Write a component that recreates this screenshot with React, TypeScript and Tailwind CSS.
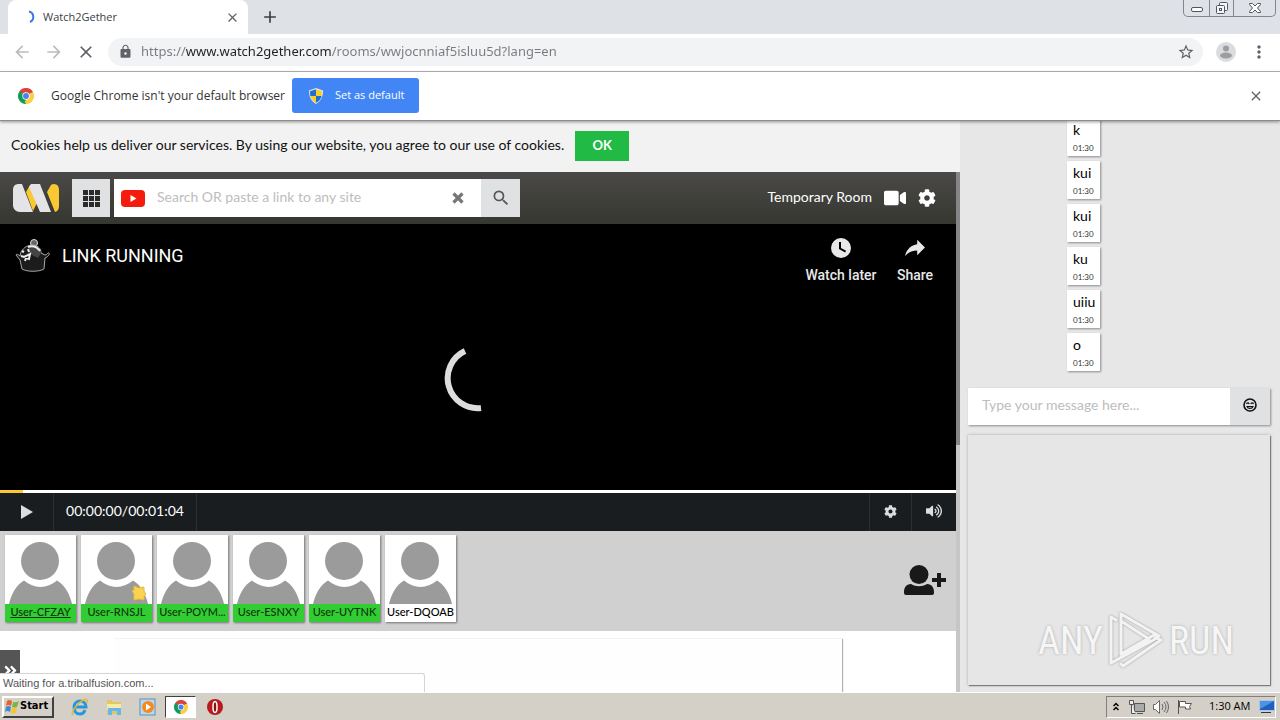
import React from 'react';
import { FaCog, FaVideo, FaVolumeUp, FaAngleDoubleRight } from 'react-icons/fa';
import { MdAdd, MdArrowBack, MdArrowForward, MdClose, MdLock, MdMoreVert, MdSearch, MdStarBorder } from 'react-icons/md';

const users = [
  { name: "User-CFZAY", active: true, self: true },
  { name: "User-RNSJL", active: true, starred: true },
  { name: "User-POYM...", active: true },
  { name: "User-ESNXY", active: true },
  { name: "User-UYTNK", active: true },
  { name: "User-DQOAB", active: false }
];

const messages = [
  { text: "k", time: "01:30" },
  { text: "kui", time: "01:30" },
  { text: "kui", time: "01:30" },
  { text: "ku", time: "01:30" },
  { text: "uiiu", time: "01:30" },
  { text: "o", time: "01:30" }
];

function ChromeLogo({ className }: { className?: string }) {
  return (
    <svg viewBox="0 0 24 24" className={className} aria-hidden="true">
      <path fill="#db4437" d="M12 12 1.6 6A12 12 0 0 1 22.4 6Z" />
      <path fill="#0f9d58" d="M12 12V24A12 12 0 0 1 1.6 6Z" />
      <path fill="#ffcd40" d="M12 12 22.4 6A12 12 0 0 1 12 24Z" />
      <path fill="#db4437" d="M12 6.5H22.6L22.4 6 12 3Z" />
      <path fill="#0f9d58" d="m7.2 14.7-5.6-8.7L4 5Z" />
      <path fill="#ffcd40" d="M16.8 14.7 12 24 10 20Z" />
      <circle cx="12" cy="12" r="5.5" fill="#fff" />
      <circle cx="12" cy="12" r="4.4" fill="#4285f4" />
    </svg>
  );
}

function ShieldIcon() {
  return (
    <svg viewBox="0 0 14 16" className="w-[14px] h-4" aria-hidden="true">
      <path fill="#e8e8e8" d="M7 0 14 2.5C14 9 12 13 7 16 2 13 0 9 0 2.5Z" />
      <path fill="#1f6fd0" d="M7 1.2V8H1.3C1.1 6.500 1 5 1 3.300Z" />
      <path fill="#f7cf2d" d="M7 1.2V8H12.700C12.900 6.500 13 5 13 3.300Z" />
      <path fill="#f7cf2d" d="M7 8H1.300C2 11 4 13.300 7 15Z" />
      <path fill="#1f6fd0" d="M7 8H12.700C12 11 10 13.300 7 15Z" />
    </svg>
  );
}

function TabStrip() {
  return (
    <div className="flex h-[34px] shrink-0 bg-[#dee1e6] pl-2">
      <div className="flex w-[240px] items-center rounded-t-lg bg-white pl-4 pr-2">
        <svg viewBox="0 0 16 16" className="mr-[3px] size-4" fill="none" aria-hidden="true">
          <path d="M5 2.600A5.500 5.500 0 0 1 6 13" stroke="#3b78e7" strokeWidth="2" />
        </svg>
        <span className="flex-1 text-[11px] text-[#3c4043]">Watch2Gether</span>
        <button aria-label="Close tab" className="text-[#5f6368]"><MdClose size={15} /></button>
      </div>
      <button aria-label="New tab" className="ml-3 text-[#3c4043]"><MdAdd size={20} /></button>
      <div className="ml-auto mr-[4px] flex h-[17px] rounded-b-[5px] border border-t-0 border-[#80858f] text-[#50555f]">
        <button aria-label="Minimize" className="flex w-[25px] items-center justify-center">
          <svg viewBox="0 0 12 12" className="size-3" fill="none" stroke="currentColor"><rect x="0.500" y="5.500" width="11" height="4" rx="1.500" fill="#fff" /></svg>
        </button>
        <button aria-label="Restore" className="flex w-[25px] items-center justify-center border-x border-[#80858f]">
          <svg viewBox="0 0 14 14" className="size-[14px]" fill="#f4f5f7" stroke="currentColor">
            <rect x="4.500" y="1.500" width="8" height="8" rx="1" /><rect x="1.500" y="4.500" width="8" height="8" rx="1" /><rect x="4.500" y="7.500" width="2" height="2" />
          </svg>
        </button>
        <button aria-label="Close" className="flex w-[41px] items-center justify-center">
          <svg viewBox="0 0 12 12" className="size-3" fill="#fff" stroke="currentColor"><path d="M.5 1.500H3.500L6 4 8.500 1.500H11.500V2.500L8.500 6 11.500 9.500V10.500H8.500L6 8 3.500 10.500H.5V9.500L3.500 6 .5 2.500Z" /></svg>
        </button>
      </div>
    </div>
  );
}

function Toolbar() {
  return (
    <div className="flex h-[38px] shrink-0 items-center border-b border-[#b3b4b6] bg-white pb-[2px] pl-3 pr-[11px]">
      <button aria-label="Back" className="text-[#babcbe]"><MdArrowBack size={20} /></button>
      <button aria-label="Forward" className="ml-3 text-[#babcbe]"><MdArrowForward size={20} /></button>
      <button aria-label="Stop" className="ml-3 text-[#5f6368]"><MdClose size={20} /></button>
      <div className="ml-3 flex h-7 flex-1 items-center rounded-full bg-[#f1f3f4] pl-[10px] pr-2">
        <MdLock size={15} className="mr-2 text-[#5f6368]" />
        <input
          aria-label="Address"
          defaultValue="https://www.watch2gether.com/rooms/wwjocnniaf5isluu5d?lang=en"
          className="min-w-0 flex-1 bg-[linear-gradient(90deg,#777b80_45px,#202124_45px,#202124_191px,#777b80_191px)] bg-clip-text font-['Noto_Sans',sans-serif] text-[13px] text-transparent outline-none"
        />
        <button aria-label="Bookmark" className="text-[#5f6368]"><MdStarBorder size={18} /></button>
      </div>
      <button aria-label="Profile" className="ml-[13px]">
        <svg viewBox="0 0 20 20" className="size-5">
          <circle cx="10" cy="10" r="10" fill="#dadcde" /><circle cx="10" cy="6.500" r="3" fill="#9b9da0" /><ellipse cx="10" cy="13.500" rx="6" ry="3" fill="#9b9da0" />
        </svg>
      </button>
      <button aria-label="Menu" className="ml-[13px] text-[#5f6368]"><MdMoreVert size={20} /></button>
    </div>
  );
}

function DefaultBrowserBar() {
  return (
    <div className="z-10 flex h-[49px] shrink-0 items-center border-b border-[#8c8c8c] bg-white pb-[1px] pl-[18px] pr-4 shadow-[0_1px_3px_rgba(0,0,0,0.4)]">
      <ChromeLogo className="size-4" />
      <span className="ml-[17px] text-[12px] text-[#333]">Google Chrome isn't your default browser</span>
      <button className="ml-[7px] flex h-[35px] w-[127px] items-center rounded-[3px] bg-[#4285f4] pl-[17px] text-[11px] text-white">
        <ShieldIcon />
        <span className="ml-3">Set as default</span>
      </button>
      <button aria-label="Dismiss" className="ml-auto text-[#5f6368]"><MdClose size={16} /></button>
    </div>
  );
}

function CookieNotice() {
  return (
    <div className="flex h-[51px] shrink-0 items-center bg-[#f2f2f2] pb-[2px] pl-[11px] text-[14px] text-[#111]">
      <span className="pb-[2px]">Cookies help us deliver our services. By using our website, you agree to our use of cookies.</span>
      <button className="ml-[11px] h-[30px] w-[54px] bg-[#21ba45] text-[13px] font-bold text-white">OK</button>
    </div>
  );
}

function RoomHeader() {
  return (
    <header className="flex h-[52px] shrink-0 items-center bg-linear-to-b from-[#4b4947] to-[#363731] pl-[13px] pr-5 text-white">
      <a href="#home" aria-label="Home">
        <svg viewBox="0 0 46 28" className="h-7 w-[46px]">
          <path fill="#fac832" d="M17 1 13 8 20 27 24 19ZM38 1Q39 0 41 0 46 0 46 6V22Q46 27 42 28L34 8Z" />
          <path fill="#e4e4e6" d="M6 0H9L20 28H7C3 28 0 25 0 21V6C0 2 2 0 6 0ZM18 0H27L38 28H27L16 3Z" />
        </svg>
      </a>
      <button aria-label="Apps" className="ml-[13px] flex h-[38px] w-[38px] items-center justify-center bg-[#e0e1e2]">
        <svg viewBox="0 0 17 17" className="size-[17px]" fill="#2b2b2b">
          <path d="M0 0h5v5H0zM6 0h5v5H6zM12 0h5v5h-5zM0 6h5v5H0zM6 6h5v5H6zM12 6h5v5h-5zM0 12h5v5H0zM6 12h5v5H6zM12 12h5v5h-5z" />
        </svg>
      </button>
      <form className="ml-1 flex h-[38px] w-[406px] bg-white" onSubmit={(e) => e.preventDefault()}>
        <div className="flex min-w-0 flex-1 items-center pl-[7px] pr-[17px]">
          <svg viewBox="0 0 24 17" className="h-[17px] w-6 shrink-0">
            <rect width="24" height="17" rx="4" fill="#f61c0d" /><path d="M9.500 5v7l6-3.500z" fill="#fff" />
          </svg>
          <input aria-label="Search" placeholder="Search OR paste a link to any site" className="mx-3 min-w-0 flex-1 pb-1 text-[14px] text-[#333] outline-none placeholder:text-[#bdbdbd]" />
          <button type="button" aria-label="Clear">
            <svg viewBox="0 0 12 12" className="size-3" stroke="#777" strokeWidth="3.200"><path d="m1.500 1.500 9 9M10.500 1.500l-9 9" /></svg>
          </button>
        </div>
        <button aria-label="Submit search" className="flex w-[39px] items-center justify-center bg-[#e0e1e2] text-[#555]"><MdSearch size={20} /></button>
      </form>
      <span className="ml-auto pb-1 text-[14px]">Temporary Room</span>
      <button aria-label="Camera" className="ml-3"><FaVideo size={22} /></button>
      <button aria-label="Room settings" className="ml-3"><FaCog size={18} /></button>
    </header>
  );
}

function Player() {
  return (
    <section className="shrink-0 text-white">
      <div className="flex h-[266px] flex-col bg-black font-['Roboto',sans-serif]">
        <div className="flex items-start pl-[14px] pr-[21px] pt-[6px]">
          <svg viewBox="0 0 36 36" className="mt-2 size-9" fill="none" aria-hidden="true">
            <circle cx="20" cy="5" r="3.500" fill="#666" stroke="#ddd" />
            <path d="M7 14c3-5 7-7 12-7 6 1 8 4 8 8l4 2c2 0 3-3 4-2s-1 4-4 5l-1 11c-5 3-17 3-22 0L6 22l-4-5c0-1 2-1 4 1Z" fill="#1c1c1c" stroke="#a8a8a8" />
            <path d="M14 9c5-3 12 1 13 6l-3 5-8-4Z" fill="#444" />
            <path d="M14 9c5-2 9 0 12 4" stroke="#eee" strokeWidth="2" />
            <path d="m8 13 2 1M14 11l1 3M7 18l3 1 6-3-1 5-3-1-1 3" stroke="#eee" strokeWidth="2" />
          </svg>
          <a href="#video" className="ml-3 mt-[14px] text-[18px] leading-6">LINK RUNNING</a>
          <button className="ml-auto flex w-20 flex-col items-center text-[14px] font-medium leading-4 text-[#e8e8e8]">
            <svg viewBox="0 0 36 36" className="size-9" fill="#e8e8e8"><path fillRule="evenodd" d="M18 8a10 10 0 1 0 0 20 10 10 0 0 0 0-20ZM16 19V12h2v5.900l5.100 2.900-1 1.700Z" /></svg>
            <span className="mt-[1px] whitespace-nowrap">Watch later</span>
          </button>
          <button className="ml-[14px] flex w-10 flex-col items-center text-[14px] font-medium leading-4 text-[#e8e8e8]">
            <svg viewBox="0 0 36 36" className="size-9" fill="#e8e8e8"><path d="m20.200 14.190 0-4.450 7.790 7.790-7.790 7.620 0-4.560C16.270 20.690 12.100 21.810 9.340 24.760c-.54.37-1.740 2.530-1.220.89C9.080 21.320 11.800 17.180 15.980 15.380c1.330-.6 2.760-.98 4.210-1.190z" /></svg>
            <span className="mt-[1px]">Share</span>
          </button>
        </div>
        <div className="flex justify-center pt-[61px]">
          <svg viewBox="0 0 68 68" className="size-[68px]" fill="none" aria-label="Loading">
            <path d="M21 7A30 30 0 0 0 37 64" stroke="#ddd" strokeWidth="6" />
          </svg>
        </div>
      </div>
      <div className="h-[3px] bg-white"><div className="h-full bg-[#fac832]" style={{ width: `${(1.55 / 64) * 100}%` }} /></div>
      <div className="flex h-[38px] bg-[#191d20] text-[#ddd]">
        <button aria-label="Play" className="flex w-[54px] items-center justify-center border-r border-[#2c3033]">
          <svg viewBox="0 0 12 14" className="h-[14px] w-3" fill="#ddd"><path d="M0 0v14l12-7z" /></svg>
        </button>
        <span className="flex w-[143px] items-center justify-center border-r border-[#2c3033] pb-1 text-[14px] text-white">00:00:00/00:01:04</span>
        <button aria-label="Playback settings" className="ml-auto flex w-[42px] items-center justify-center border-l border-[#2c3033] pb-[2px]"><FaCog size={13} /></button>
        <button aria-label="Volume" className="flex w-[45px] items-center justify-center border-l border-[#2c3033] pb-[2px]"><FaVolumeUp size={16} /></button>
      </div>
    </section>
  );
}

function UserCard({ user }: { user: { name: string; active: boolean; self?: boolean; starred?: boolean } }) {
  return (
    <button className="relative h-[87px] w-[71px] bg-white shadow-[1px_1px_2px_rgba(0,0,0,0.45)]">
      <svg viewBox="0 0 71 68" className="h-[68px] w-full" fill="#9b9b9b">
        <circle cx="35" cy="25" r="19" /><path d="M19 44.500C29 53 42 53 52 44.500 60 49 65 59 67 68H4C6 59 11 49 19 44.500Z" />
      </svg>
      {user.starred && (
        <svg viewBox="0 0 16 16" className="absolute left-[50px] top-[50px] size-4" fill="#fbd252" stroke="#e7b93b">
          <path d="m3 1 5 2 5-1v4l2 3-2 2v4l-5-1-5 1V9L1 6l2-1Z" />
        </svg>
      )}
      <span className={user.active
        ? "block h-[18px] whitespace-nowrap bg-[#32cd32] text-[11px] font-medium leading-4 text-[#0c360c]"
        : "block h-[18px] whitespace-nowrap bg-white text-[11px] font-medium leading-4 text-black"}>
        <span className={user.self ? "underline" : ""}>{user.name}</span>
      </span>
    </button>
  );
}

function UserBar() {
  return (
    <section className="flex h-[100px] shrink-0 items-start bg-[#d0d0d0] pl-[5px] pr-[10px] pt-1">
      <div className="flex gap-[5px]">
        {users.map((user) => <UserCard key={user.name} user={user} />)}
      </div>
      <button aria-label="Invite user" className="ml-auto mt-[30px]">
        <svg viewBox="0 0 42 31" className="h-[31px] w-[42px]" fill="#191919">
          <circle cx="15" cy="9.500" r="9.500" /><path d="M7 19c5 3 11 3 16 0 5 0 7 4 7 8v1q0 2-2 2H2q-2 0-2-2v-1c0-4 2-8 7-8ZM33 8h4v5h5v4h-5v5h-4v-5h-5v-4h5z" />
        </svg>
      </button>
    </section>
  );
}

function Chat() {
  return (
    <aside className="flex w-[320px] shrink-0 flex-col bg-[#e7e7e7] pb-[7px] pl-2 pr-[10px]">
      <ul className="flex min-h-0 flex-1 flex-col items-start justify-end gap-[5px] overflow-hidden pb-[17px] pl-[99px]">
        {messages.map((message, i) => (
          <li key={i} className="flex h-[38px] w-[33px] shrink-0 flex-col bg-white pl-[6px] shadow-[1px_1px_2px_rgba(0,0,0,0.4)]">
            <span className="mt-[2px] text-[14px] leading-5 text-black">{message.text}</span>
            <time className="mt-[2px] text-[8px] leading-3 text-[#333]">{message.time}</time>
          </li>
        ))}
      </ul>
      <div className="flex h-[37px] shrink-0 bg-[#e0e1e2] shadow-[1px_1px_2px_rgba(0,0,0,0.4)]">
        <input aria-label="Message" placeholder="Type your message here..." className="min-w-0 flex-1 bg-white pb-1 pl-[14px] text-[14px] text-[#333] outline-none placeholder:text-[#bdbdbd]" />
        <button aria-label="Emoji" className="flex w-10 items-center justify-center pb-1">
          <svg viewBox="0 0 14 14" className="size-[14px]" fill="none" stroke="#111">
            <circle cx="7" cy="7" r="6" strokeWidth="1.600" /><path d="M3.500 6c.5-1.500 2-1.500 2.700 0M7.800 6c.5-1.500 2-1.500 2.700 0M4 8.500c1 2.500 5 2.500 6 0Z" strokeWidth="1.200" />
          </svg>
        </button>
      </div>
      <div className="mt-[10px] flex h-[250px] shrink-0 items-end justify-end bg-[#e6e6e6] pb-3 pr-9 shadow-[0_0_3px_rgba(0,0,0,0.25),1px_1px_1px_rgba(0,0,0,0.4)]">
        <div className="flex items-center gap-1 font-['Roboto_Condensed','Liberation_Sans_Narrow','Liberation_Sans',sans-serif] text-[38px] leading-[64px] text-[#f6f6f6] [text-shadow:0_0_3px_#aaa]">
          <span>ANY</span>
          <svg viewBox="0 0 58 64" className="h-16 w-[58px] drop-shadow-[0_0_1px_#999]" fill="none" stroke="#f3f3f3" strokeWidth="3" strokeLinejoin="round" strokeLinecap="round">
            <path d="M14 45V5l38 22-4 2M14 45l35-20M9 11 4 8v46l46-25 4 2-38 26-2-2M14 12l28 18-28 18" />
          </svg>
          <span>RUN</span>
        </div>
      </div>
    </aside>
  );
}

function Taskbar() {
  return (
    <footer className="flex h-7 shrink-0 items-center border-t border-white bg-[#d4d0c8] pl-[2px] pr-1 text-black">
      <button className="flex h-[22px] w-[52px] items-center border-2 border-b-[#404040] border-l-white border-r-[#404040] border-t-white text-[11px] font-bold">
        <svg viewBox="0 0 16 16" className="size-4 shrink-0">
          <path fill="#e8622c" d="M3 2q2-2 5 0L7 7q-3-2-5 0Z" /><path fill="#75b843" d="M9 3q3 1 6-1l-2 6q-2 1-5 0Z" /><path fill="#4089d0" d="M2 8q2-2 5 0l-1 5q-3-2-5 0Z" /><path fill="#f7c52d" d="M8 9q3 1 5-1l-1 6q-3 1-5 0Z" />
        </svg>
        <span className="font-['DejaVu_Sans_Condensed','DejaVu_Sans',sans-serif]">Start</span>
      </button>
      <nav className="ml-[9px] flex items-center">
        <button aria-label="Internet Explorer" className="flex w-[34px] justify-center">
          <svg viewBox="0 0 18 18" className="size-[18px]" fill="none">
            <path d="M14 12c-1 3-3 4-5 4-4 0-6-3-6-7s3-6 6-6 6 2 6 6H4" stroke="#2597dd" strokeWidth="3" /><path d="M2 17C-2 14 12-1 16 2q1 1 0 3" stroke="#e6b635" strokeWidth="1.500" />
          </svg>
        </button>
        <button aria-label="Explorer" className="flex w-[34px] justify-center">
          <svg viewBox="0 0 18 18" className="size-[18px]">
            <path fill="#e3c668" d="M2 2h5l1 2h8v12H2z" /><path fill="#f9e9a6" d="M2 6h14v6H2z" /><path fill="#65b9e9" d="M3 10h13v7h-4v-4H7v4H3z" />
          </svg>
        </button>
        <button aria-label="Media Player" className="flex w-[34px] justify-center">
          <svg viewBox="0 0 18 18" className="size-[18px]">
            <rect x="1" y="1" width="15" height="16" fill="#b9d9f0" stroke="#5892be" /><circle cx="9" cy="9" r="6" fill="#f58a1f" /><path d="M7 5.500v7L12 9z" fill="#fff" />
          </svg>
        </button>
        <button aria-label="Chrome" className="flex h-[22px] w-[31px] items-center justify-center border border-b-white border-l-[#404040] border-r-white border-t-[#404040] bg-white"><ChromeLogo className="size-[14px]" /></button>
        <button aria-label="Opera" className="flex w-[37px] justify-center">
          <svg viewBox="0 0 16 16" className="size-4"><circle cx="8" cy="8" r="8" fill="#b51a1e" /><ellipse cx="8" cy="8" rx="2" ry="5.500" fill="#8b1012" stroke="#fff" strokeWidth="1.500" /></svg>
        </button>
      </nav>
      <div className="ml-auto flex h-[22px] w-[170px] items-center border border-b-white border-l-[#808080] border-r-white border-t-[#808080] pl-[6px]">
        <svg viewBox="0 0 6 9" className="h-[9px] w-[6px]" fill="none" stroke="#000" strokeWidth="1.500"><path d="m.5 4 2.500-2.500L5.500 4M.5 8l2.500-2.500L5.500 8" /></svg>
        <svg viewBox="0 0 16 16" className="ml-[10px] size-4" fill="#eee" stroke="#555"><path d="M5.500 4.500h10v8h-10z" fill="#aaa" /><path d="M8 14.500h6M.5 1.500h4v4h-4zM2.500 5.500v9h4" /></svg>
        <svg viewBox="0 0 16 16" className="ml-2 size-4" fill="#fff" stroke="#666"><path d="M.5 5.500h2l4-4v13l-4-4h-2z" /><path d="M9 5q2 3 0 6M11 3q4 5 0 10M13.500 2q4 6 0 12" fill="none" /></svg>
        <svg viewBox="0 0 16 16" className="ml-2 size-4" fill="#fff" stroke="#555"><path d="M1.500 1v14M2.500 2.500h6v2h6l-2 3 1 2.500h-5v-2h-6z" /></svg>
        <span className="ml-[16px] whitespace-nowrap text-[11px]">1:30 AM</span>
        <svg viewBox="0 0 16 14" className="ml-auto h-[14px] w-4"><path fill="#1f5fbd" stroke="#a8c5ea" d="M.5.5h15v10H.5z" /><path fill="#4b93e5" d="M1 1h14L1 9z" /><path fill="#334" d="M2 12h10v1H2z" /></svg>
      </div>
    </footer>
  );
}

export default function App() {
  return (
    <div className="flex h-screen flex-col overflow-hidden bg-white font-['Open_Sans',sans-serif]">
      <TabStrip />
      <Toolbar />
      <DefaultBrowserBar />
      <div className="relative flex min-h-0 flex-1 font-['Lato',sans-serif]">
        <main className="flex min-w-0 flex-1 flex-col">
          <CookieNotice />
          <div className="flex min-h-0 flex-1">
            <div className="flex min-w-0 flex-1 flex-col overflow-hidden">
              <RoomHeader />
              <Player />
              <UserBar />
              <div className="flex flex-1 items-stretch bg-white">
                <button aria-label="Expand" className="mt-[19px] flex w-5 justify-center bg-[#555] pt-[13px] text-white"><FaAngleDoubleRight size={15} /></button>
                <div className="ml-[94px] mr-[114px] mt-2 flex-1 bg-[#fefefe] shadow-[1px_0_1px_rgba(0,0,0,0.3)]" />
              </div>
            </div>
            <div className="w-1 shrink-0 bg-[#c6c6c6]"><div className="h-[273px] bg-[#858585]" /></div>
          </div>
        </main>
        <Chat />
        <div className="absolute bottom-0 left-0 w-[425px] rounded-tr-[3px] border-r border-t border-[#d5d5d5] bg-white pl-[3px] font-['Liberation_Sans',sans-serif] text-[11px] leading-[18px] text-[#555]">Waiting for a.tribalfusion.com...</div>
      </div>
      <Taskbar />
    </div>
  );
}
